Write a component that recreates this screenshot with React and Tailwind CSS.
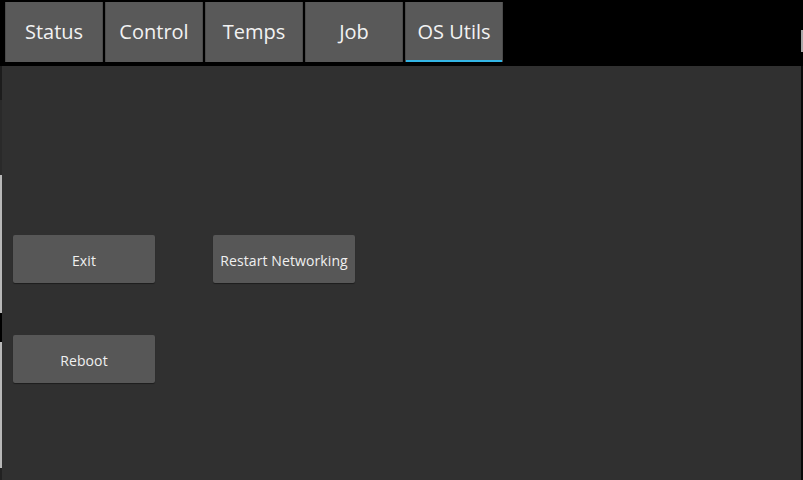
import React from "react";

const tabs = ["Status", "Control", "Temps", "Job", "OS Utils"];

function Tab({ label, active }) {
  return (
    <div className="relative w-[98px] h-[60px] bg-[#595959] flex items-center justify-center text-[20px] text-[#f2f2f2] border-x border-[#4a4a4a]">
      <span>{label}</span>
      {active && <div className="absolute left-0 right-0 bottom-0 h-[2px] bg-[#33b5e5]" />}
    </div>
  );
}

function Btn({ label }) {
  return (
    <div className="w-[142px] h-[48px] bg-[#575757] rounded-[2px] shadow-[0_1px_1px_rgba(0,0,0,0.4)] flex items-center justify-center text-[14px] tracking-[0.1px] text-[#f0f0f0]">
      <span className="mt-[2px]">{label}</span>
    </div>
  );
}

export default function App() {
  return (
    <div
      className="w-[803px] h-[480px] bg-black flex flex-col overflow-hidden"
      style={{ fontFamily: '"Open Sans", "Noto Sans", sans-serif' }}
    >
      <div className="flex h-[66px]">
        <div className="flex flex-col w-[801px]">
          <div className="flex gap-[2px] pl-[5px] pt-[2px]">
            {tabs.map((t) => (
              <Tab key={t} label={t} active={t === "OS Utils"} />
            ))}
          </div>
        </div>
        <div className="flex flex-col w-[2px]">
          <div className="h-[30px] bg-black" />
          <div className="h-[22px] bg-[#a8a8a8]" />
          <div className="flex-1 bg-black" />
        </div>
      </div>
      <div className="flex flex-1">
        <div className="flex flex-col w-[2px]">
          <div className="h-[34px] bg-[#1c1c1c]" />
          <div className="h-[75px] bg-[#2a2a2a]" />
          <div className="h-[138px] bg-[#b8b8b8]" />
          <div className="h-[29px] bg-black" />
          <div className="h-[126px] bg-[#b8b8b8]" />
          <div className="flex-1 bg-[#222]" />
        </div>
        <div className="w-[799px] bg-[#303030] pl-[11px] pt-[169px]">
          <div className="grid grid-cols-[142px_142px] gap-x-[58px] gap-y-[52px]">
            <Btn label="Exit" />
            <Btn label="Restart Networking" />
            <Btn label="Reboot" />
          </div>
        </div>
        <div className="w-[2px] bg-[#0a0a0a]" />
      </div>
    </div>
  );
}
